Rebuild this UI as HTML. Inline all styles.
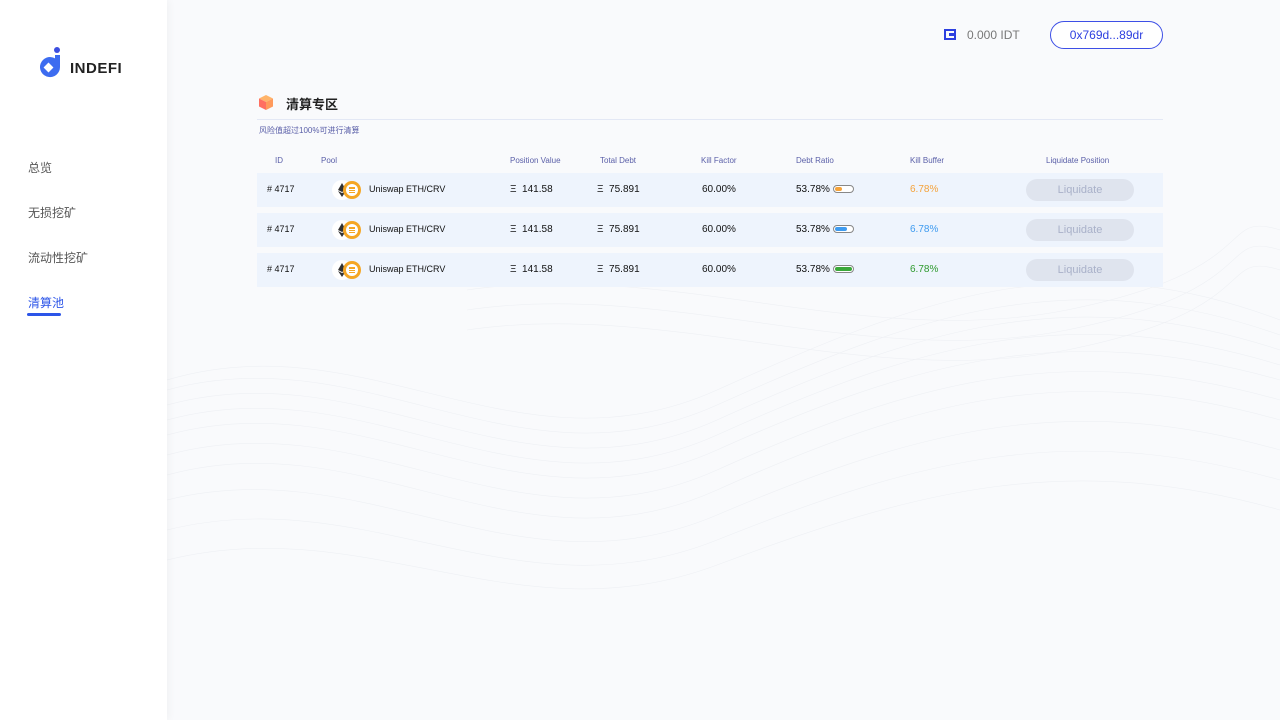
<!DOCTYPE html>
<html><head><meta charset="utf-8"><style>
*{margin:0;padding:0;box-sizing:border-box}
body{width:1280px;height:720px;overflow:hidden;background:#f9fafc;font-family:"Liberation Sans","Noto Sans CJK SC",sans-serif;position:relative}
.side{position:absolute;left:0;top:0;width:167px;height:720px;background:#fff;box-shadow:2px 0 8px rgba(0,0,0,0.04);z-index:2}
.logo{position:absolute;left:38px;top:47px}
.logotext{position:absolute;left:70px;top:60px;font-size:15px;font-weight:bold;color:#222;letter-spacing:0.5px}
.nav{position:absolute;left:28px;font-size:12px;color:#555}
.abs{position:absolute}
.h{position:absolute;top:156px;font-size:8px;color:#5a5fa8}
.row{position:absolute;left:257px;width:906px;height:34px;background:#eef4fd}
.c{position:absolute;top:11px;font-size:10px;color:#111}
.btn{position:absolute;left:769px;top:6px;width:108px;height:22px;border-radius:11px;background:#dfe4ee;color:#a9b1c9;font-size:11px;text-align:center;line-height:22px}
.bar{position:absolute;left:576px;top:12px;width:21px;height:8px;border:1px solid #888;border-radius:4px;background:#fff}
.bar i{position:absolute;left:1px;top:1px;height:4px;border-radius:2px}
</style></head><body>
<svg class="abs" style="left:167px;top:60px" width="1113" height="660" viewBox="0 0 1113 660">
<g fill="none" stroke="#eef0f4" stroke-width="0.6">
<path d="M0 320 C200 260 350 420 550 330 S900 180 1113 260"/>
<path d="M0 330 C200 275 350 435 550 345 S900 200 1113 275"/>
<path d="M0 345 C200 290 350 450 550 360 S900 220 1113 290"/>
<path d="M0 360 C200 305 350 465 550 375 S900 240 1113 305"/>
<path d="M0 375 C200 320 350 480 550 390 S900 260 1113 320"/>
<path d="M0 395 C200 340 350 500 550 410 S900 280 1113 340"/>
<path d="M0 415 C200 360 350 520 550 430 S900 300 1113 360"/>
<path d="M0 440 C200 390 350 540 550 455 S900 330 1113 390"/>
<path d="M0 470 C200 420 350 560 550 480 S900 360 1113 420"/>
<path d="M0 500 C200 450 350 580 550 505 S900 390 1113 450"/>
<path d="M300 230 C500 200 700 290 900 250 S1050 150 1113 170"/>
<path d="M300 250 C500 220 700 310 900 270 S1050 170 1113 190"/>
<path d="M300 270 C500 240 700 330 900 290 S1050 190 1113 210"/>
</g></svg>
<div class="side">
<svg class="logo" width="26" height="32" viewBox="0 0 26 32"><circle cx="19" cy="3" r="3" fill="#3c4ee0"/><path d="M17 8 h5 v12 a10 10 0 1 1 -5 -8.6z" fill="#3d6cf0"/><rect x="7" y="17" width="7" height="7" transform="rotate(45 10.5 20.5)" fill="#fff"/></svg>
<div class="logotext">INDEFI</div>
<div class="nav" style="top:159px">总览</div>
<div class="nav" style="top:204px">无损挖矿</div>
<div class="nav" style="top:249px">流动性挖矿</div>
<div class="nav" style="top:294px;color:#2c55e8">清算池</div>
<div class="abs" style="left:27px;top:313px;width:34px;height:3px;border-radius:2px;background:#2c55e8"></div>
</div>
<div class="abs" style="left:944px;top:29px;width:12px;height:11px;border:2px solid #2d3fe0"><div style="position:absolute;left:3px;top:2px;width:5px;height:3px;background:#2d3fe0"></div></div>
<div class="abs" style="left:967px;top:28px;font-size:12px;color:#777">0.000 IDT</div>
<div class="abs" style="left:1050px;top:21px;width:113px;height:28px;border:1px solid #3d4fe6;border-radius:14px;text-align:center;line-height:26px;font-size:12px;color:#2d3fe0;background:#fff">0x769d...89dr</div>
<svg class="abs" style="left:258px;top:94px" width="16" height="17" viewBox="0 0 16 17"><path d="M8 1 L15 4.5 L8 8 L1 4.5z" fill="#ffb46a"/><path d="M1 4.5 L8 8 V16 L1 12.5z" fill="#ff6f61"/><path d="M15 4.5 L8 8 V16 L15 12.5z" fill="#ff9a5c"/></svg>
<div class="abs" style="left:286px;top:94px;font-size:13px;font-weight:bold;color:#222">清算专区</div>
<div class="abs" style="left:257px;top:119px;width:906px;height:1px;background:#e3e8f5"></div>
<div class="abs" style="left:259px;top:125px;font-size:8px;color:#5a5fa8">风险值超过100%可进行清算</div>
<div class="h" style="left:275px">ID</div><div class="h" style="left:321px">Pool</div><div class="h" style="left:510px">Position Value</div><div class="h" style="left:600px">Total Debt</div><div class="h" style="left:701px">Kill Factor</div><div class="h" style="left:796px">Debt Ratio</div><div class="h" style="left:910px">Kill Buffer</div><div class="h" style="left:1046px">Liquidate Position</div>
<div class="row" style="top:173px">
<div class="c" style="left:10px;font-size:9px">#&nbsp;4717</div>
<svg class="abs" style="left:74px;top:6px" width="32" height="22"><circle cx="11" cy="11" r="10" fill="#fff"/><path d="M11 4 L7 11 L11 13 L15 11z M7 12 L11 18 L15 12 L11 14z" fill="#333"/><circle cx="21" cy="11" r="9" fill="#f5a623"/><circle cx="21" cy="11" r="6" fill="#fff"/><rect x="18" y="8" width="6" height="6" fill="#f5a623"/><rect x="17" y="10" width="8" height="1" fill="#fff"/><rect x="17" y="12" width="8" height="1" fill="#fff"/></svg>
<div class="c" style="left:112px;font-size:9px">Uniswap ETH/CRV</div>
<div class="c" style="left:253px">Ξ&nbsp;&nbsp;141.58</div><div class="c" style="left:340px">Ξ&nbsp;&nbsp;75.891</div><div class="c" style="left:445px">60.00%</div><div class="c" style="left:539px">53.78%</div>
<div class="bar"><i style="width:7px;background:#f5a33b"></i></div>
<div class="c" style="left:653px;color:#f5a33b">6.78%</div><div class="btn">Liquidate</div></div>
<div class="row" style="top:213px">
<div class="c" style="left:10px;font-size:9px">#&nbsp;4717</div>
<svg class="abs" style="left:74px;top:6px" width="32" height="22"><circle cx="11" cy="11" r="10" fill="#fff"/><path d="M11 4 L7 11 L11 13 L15 11z M7 12 L11 18 L15 12 L11 14z" fill="#333"/><circle cx="21" cy="11" r="9" fill="#f5a623"/><circle cx="21" cy="11" r="6" fill="#fff"/><rect x="18" y="8" width="6" height="6" fill="#f5a623"/><rect x="17" y="10" width="8" height="1" fill="#fff"/><rect x="17" y="12" width="8" height="1" fill="#fff"/></svg>
<div class="c" style="left:112px;font-size:9px">Uniswap ETH/CRV</div>
<div class="c" style="left:253px">Ξ&nbsp;&nbsp;141.58</div><div class="c" style="left:340px">Ξ&nbsp;&nbsp;75.891</div><div class="c" style="left:445px">60.00%</div><div class="c" style="left:539px">53.78%</div>
<div class="bar"><i style="width:12px;background:#3e9bf0"></i></div>
<div class="c" style="left:653px;color:#3e9bf0">6.78%</div><div class="btn">Liquidate</div></div>
<div class="row" style="top:253px">
<div class="c" style="left:10px;font-size:9px">#&nbsp;4717</div>
<svg class="abs" style="left:74px;top:6px" width="32" height="22"><circle cx="11" cy="11" r="10" fill="#fff"/><path d="M11 4 L7 11 L11 13 L15 11z M7 12 L11 18 L15 12 L11 14z" fill="#333"/><circle cx="21" cy="11" r="9" fill="#f5a623"/><circle cx="21" cy="11" r="6" fill="#fff"/><rect x="18" y="8" width="6" height="6" fill="#f5a623"/><rect x="17" y="10" width="8" height="1" fill="#fff"/><rect x="17" y="12" width="8" height="1" fill="#fff"/></svg>
<div class="c" style="left:112px;font-size:9px">Uniswap ETH/CRV</div>
<div class="c" style="left:253px">Ξ&nbsp;&nbsp;141.58</div><div class="c" style="left:340px">Ξ&nbsp;&nbsp;75.891</div><div class="c" style="left:445px">60.00%</div><div class="c" style="left:539px">53.78%</div>
<div class="bar"><i style="width:17px;background:#3aa83a"></i></div>
<div class="c" style="left:653px;color:#2e9a2e">6.78%</div><div class="btn">Liquidate</div></div>
</body></html>
